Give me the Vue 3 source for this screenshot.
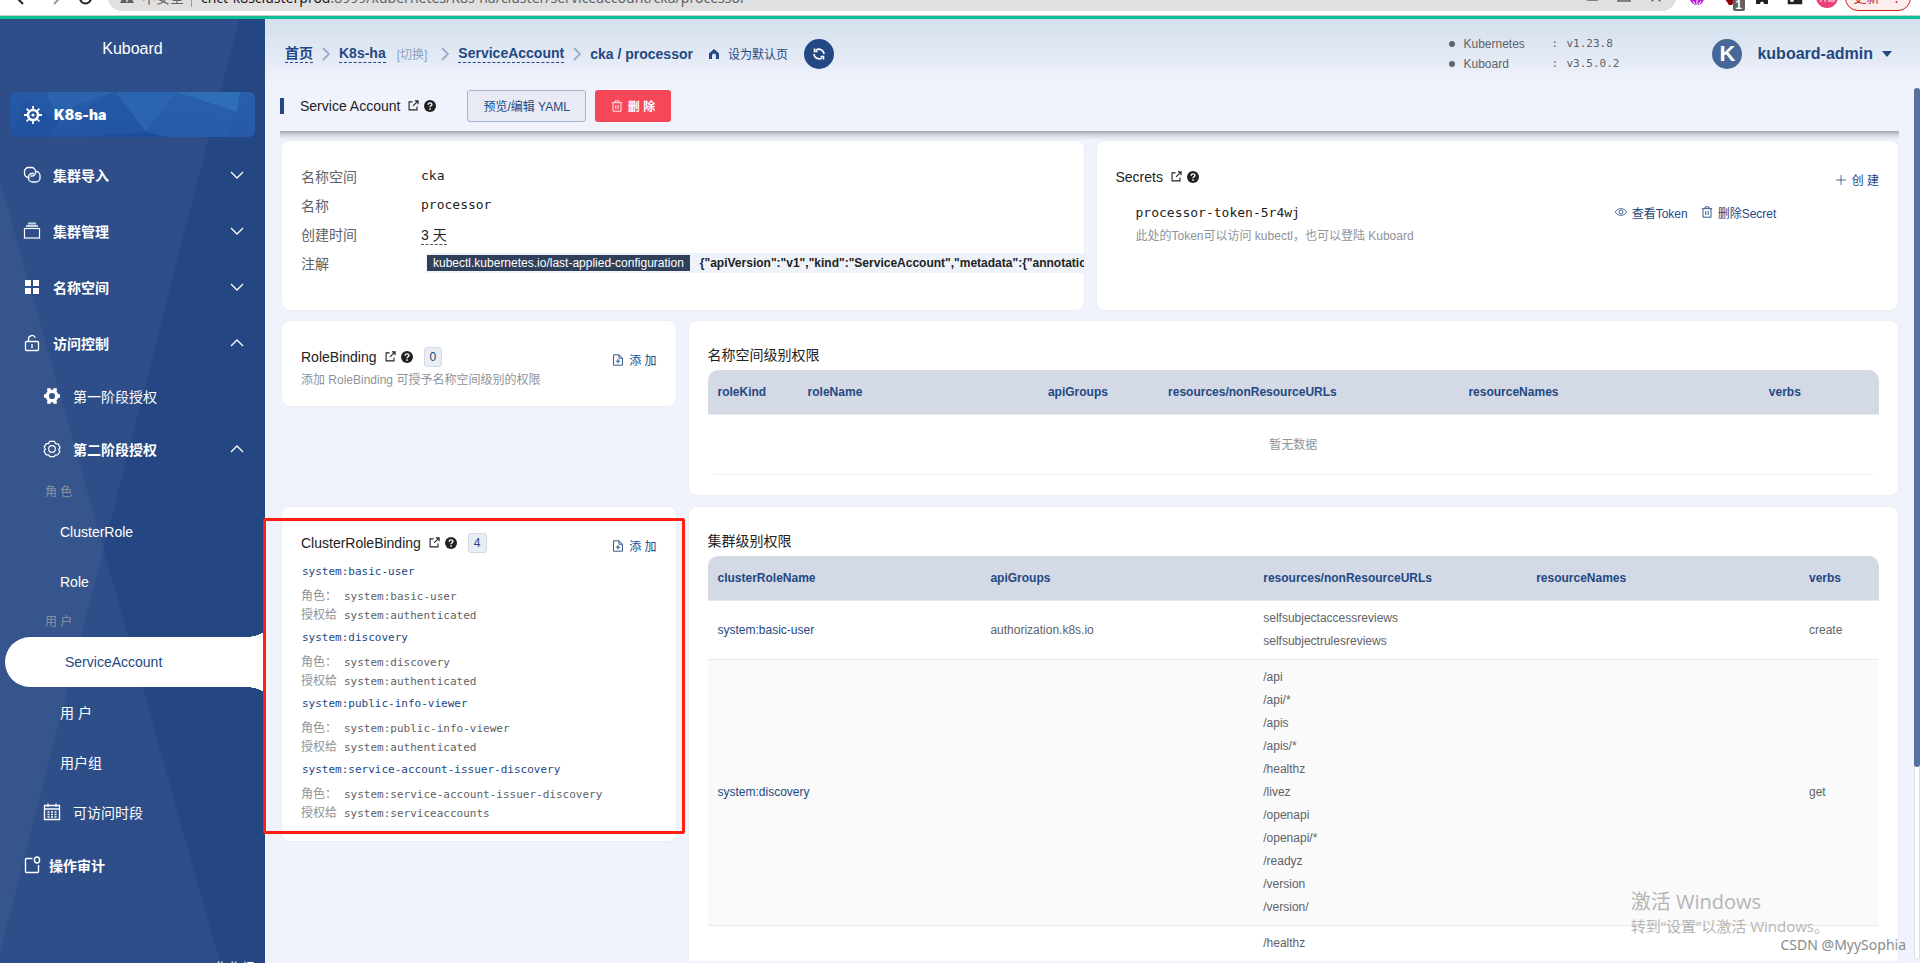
<script setup>
const topMenu = [
  { label: '集群导入', icon: 'link' },
  { label: '集群管理', icon: 'stack' },
  { label: '名称空间', icon: 'grid' },
]

const bindings = [
  { name: 'system:basic-user', to: 'system:authenticated' },
  { name: 'system:discovery', to: 'system:authenticated' },
  { name: 'system:public-info-viewer', to: 'system:authenticated' },
  { name: 'system:service-account-issuer-discovery', to: 'system:serviceaccounts' },
]

const nsColumns = ['roleKind', 'roleName', 'apiGroups', 'resources/nonResourceURLs', 'resourceNames', 'verbs']
const clusterColumns = ['clusterRoleName', 'apiGroups', 'resources/nonResourceURLs', 'resourceNames', 'verbs']

const clusterRows = [
  {
    name: 'system:basic-user',
    group: 'authorization.k8s.io',
    resources: ['selfsubjectaccessreviews', 'selfsubjectrulesreviews'],
    verb: 'create',
  },
  {
    name: 'system:discovery',
    group: '',
    resources: ['/api', '/api/*', '/apis', '/apis/*', '/healthz', '/livez', '/openapi', '/openapi/*', '/readyz', '/version', '/version/'],
    verb: 'get',
  },
  {
    name: 'system:public-info-viewer',
    group: '',
    resources: ['/healthz', '/livez', '/readyz', '/version', '/version/'],
    verb: 'get',
  },
]
</script>

<template>
  <div class="page">
    <svg class="defs" width="0" height="0" aria-hidden="true">
      <symbol id="i-ext" viewBox="0 0 12 12">
        <path d="M5 2H1.2v8.8h8.6V7M7.500 1H11v3.500M11 1 5.500 6.500" fill="none" stroke="currentColor" stroke-width="1.200" />
      </symbol>
      <symbol id="i-help" viewBox="0 0 12 12">
        <circle cx="6" cy="6" r="6" fill="currentColor" />
        <path d="M4.200 4.700c0-2.400 3.700-2.300 3.700-.2C7.900 5.800 6 5.700 6 7.300" fill="none" stroke="#fff" stroke-width="1.400" />
        <rect x="5.300" y="8.300" width="1.500" height="1.500" fill="#fff" />
      </symbol>
      <symbol id="i-trash" viewBox="0 0 12 12">
        <path d="M.8 2.700h10.400M4 2.500V.9h4v1.600M2 3v8.200h8V3M4.800 5v4M7.200 5v4" fill="none" stroke="currentColor" stroke-width=".9" />
      </symbol>
      <symbol id="i-doc" viewBox="0 0 12 12">
        <path d="M1.500.8h5.500l3.500 3.400v7h-9zM7 .8v3.400h3.500M3.800 7.200h4.400M6 5v4.400" fill="none" stroke="currentColor" stroke-width=".9" />
      </symbol>
      <symbol id="i-down" viewBox="0 0 14 8">
        <path d="M1 1l6 6 6-6" fill="none" stroke="currentColor" stroke-width="1.300" />
      </symbol>
      <symbol id="i-up" viewBox="0 0 14 8">
        <path d="M1 7l6-6 6 6" fill="none" stroke="currentColor" stroke-width="1.300" />
      </symbol>
      <symbol id="i-right" viewBox="0 0 8 14">
        <path d="M1 1l6 6-6 6" fill="none" stroke="currentColor" stroke-width="1.800" />
      </symbol>
    </svg>

    <div class="chrome">
      <svg class="nav-icons" width="108" height="15" viewBox="0 0 108 15" aria-hidden="true">
        <path d="M15-4l8 8" stroke="#222" stroke-width="2" fill="none" />
        <path d="M61-3l-7 7" stroke="#999" stroke-width="2" fill="none" />
        <path d="M80-2a5.500 5.500 0 0 0 11 0" stroke="#222" stroke-width="2" fill="none" />
      </svg>
      <div class="address">
        <svg width="14" height="22" viewBox="0 0 14 22" aria-hidden="true"><path d="M7 4l7 13H0z" fill="#5f6368" /><path d="M7 8v4M7 14v2" stroke="#e0e0e0" stroke-width="1.500" /></svg>
        <span class="unsafe">不安全</span>
        <span class="url"><b>cnct-k8sclusterprod</b>:8999/kubernetes/K8s-ha/cluster/serviceaccount/cka/processor</span>
        <svg class="address-icons" width="78" height="22" viewBox="0 0 78 22" aria-hidden="true">
          <g fill="none" stroke="#5f6368" stroke-width="1.500">
            <rect x="1" y="5" width="11" height="9" rx="1" />
            <path d="M32 6v9h12v-4M36 12c1-3 3-4 7-4" />
          </g>
          <path d="M70 5l2 4h4l-2 3 1 4-5-3-5 3 1-4-2-3h4z" fill="#5f6368" />
        </svg>
      </div>
      <svg class="extensions" width="154" height="15" viewBox="0 0 154 15" aria-hidden="true">
        <circle cx="14" cy="-2" r="7" fill="#b61ed6" />
        <path d="M10 1l2 3M14 0v5M18 1l-2 3" stroke="#fff" />
        <path d="M40-4h14l-5 9h-3z" fill="#8b0000" />
        <rect x="50" y="-4" width="12" height="15" rx="2" fill="#5f6163" />
        <path d="M73 4v-6h12v6h-4a2 2.500 0 0 0-4 0z" fill="#202124" />
        <path d="M106-4h12v7h-12zM112-3v4h5" fill="none" stroke="#202124" stroke-width="2.500" />
        <circle cx="144" cy="-3" r="11" fill="#ec407a" />
        <path d="M138-3v5M142-3v5M145 1h7" stroke="#fff" />
      </svg>
      <span class="ext-count">1</span>
      <button class="update" type="button">更新 <span>⋮</span></button>
    </div>

    <div class="body">
      <aside class="sidebar">
        <svg class="facets" viewBox="0 0 265 944" preserveAspectRatio="none" aria-hidden="true">
          <path d="M0 0H239L0 934z" fill="#fff" opacity=".042" />
          <path d="M0 162L220 944H0z" fill="#fff" opacity=".042" />
        </svg>
        <div class="brand">Kuboard</div>
        <a class="cluster" href="#">
          <svg class="cluster-bg" viewBox="0 0 245 45" preserveAspectRatio="none" aria-hidden="true">
            <defs>
              <linearGradient id="cluster-fill" x1="0" y1="1" x2="1" y2="0">
                <stop offset="0" stop-color="#2353a0" />
                <stop offset="1" stop-color="#2860ae" />
              </linearGradient>
            </defs>
            <path d="M0 0h245v45H0z" fill="url(#cluster-fill)" />
            <path d="M36 0h69L50 30z" fill="#2f69b3" opacity=".6" />
            <path d="M105 0h61l-30 40z" fill="#2f6bb6" opacity=".6" />
            <path d="M166 0h64l-3 20z" fill="#3679bd" opacity=".6" />
            <path d="M62 14L105 0l31 40-60 5z" fill="#2055a2" opacity=".45" />
            <path d="M166 0l61 20-10 25h-60l-21-5z" fill="#2a60ae" opacity=".5" />
            <path d="M0 45L14 8 50 30l-14 15z" fill="#1e4f9b" opacity=".45" />
            <path d="M76 45l60-5 21 5z" fill="#1b4a94" opacity=".7" />
          </svg>
          <svg class="m-icon" width="18" height="18" viewBox="0 0 18 18" aria-hidden="true">
            <circle cx="9" cy="9" r="5" fill="none" stroke="#fff" stroke-width="2.600" />
            <circle cx="9" cy="9" r="1.600" fill="#fff" />
            <path d="M9 0v4M9 14v4M0 9h4M14 9h4M2.600 2.600l2.800 2.800M12.600 12.600l2.800 2.800M15.400 2.600l-2.800 2.800M5.400 12.600l-2.800 2.800" stroke="#fff" stroke-width="1.800" />
          </svg>
          <span>K8s-ha</span>
        </a>

        <nav class="menu">
          <a v-for="m in topMenu" :key="m.label" class="item top" href="#">
            <svg v-if="m.icon === 'link'" class="m-icon" width="18" height="18" viewBox="0 0 18 18" fill="none" stroke="#fff" stroke-width="1.300" aria-hidden="true">
              <path d="M6.500 11.500h-1a4 4 0 0 1-4-4v-2a4 4 0 0 1 4-4h3a4 4 0 0 1 4 4v1a3.500 3.500 0 0 1-3.500 3.500H7.500" />
              <path d="M12.500 5.500h.5a4 4 0 0 1 4 4v2.500a4 4 0 0 1-4 4H9.500a4 4 0 0 1-4-4v-1A3.500 3.500 0 0 1 9 7.500h2" />
            </svg>
            <svg v-else-if="m.icon === 'stack'" class="m-icon" width="18" height="18" viewBox="0 0 18 18" fill="none" stroke="#fff" aria-hidden="true">
              <path d="M5 1.500h8M3 4h12" stroke-width="1.800" opacity=".75" />
              <rect x="1.500" y="6.500" width="15" height="9.500" stroke-width="1.200" />
            </svg>
            <svg v-else class="m-icon" width="18" height="18" viewBox="0 0 18 18" fill="#fff" aria-hidden="true">
              <path d="M2 2h6v6H2zM10 2h6v6h-6zM2 10h6v6H2zM10 10h6v6h-6z" />
            </svg>
            <span>{{ m.label }}</span>
            <svg class="arrow" width="14" height="8" aria-hidden="true"><use href="#i-down" /></svg>
          </a>
          <a class="item top" href="#">
            <svg class="m-icon" width="18" height="18" viewBox="0 0 18 18" fill="none" stroke="#fff" stroke-width="1.300" aria-hidden="true">
              <rect x="2.500" y="7.500" width="13" height="9" rx="1" />
              <path d="M5.500 7.500V5a3.500 3.500 0 0 1 6.800-1.200M9 10v4" />
            </svg>
            <span>访问控制</span>
            <svg class="arrow" width="14" height="8" aria-hidden="true"><use href="#i-up" /></svg>
          </a>
          <a class="item sub" href="#">
            <svg class="m-icon" width="18" height="18" viewBox="0 0 18 18" aria-hidden="true">
              <circle cx="9" cy="9" r="4.800" fill="none" stroke="#fff" stroke-width="3.400" />
              <path d="M5.500 1.300L6.500 5M12.500 1.300L11.500 5M5.500 16.700L6.500 13M12.500 16.700L11.500 13M1 9h3M14 9h3" stroke="#fff" stroke-width="3.400" />
            </svg>
            <span>第一阶段授权</span>
          </a>
          <a class="item sub strong" href="#">
            <svg class="m-icon" width="18" height="18" viewBox="0 0 18 18" fill="none" stroke="#fff" stroke-width="1.200" stroke-linejoin="round" aria-hidden="true">
              <path d="M6.500 1.300h5l1 2.300 2.600.2 2 4-1.500 1.500 1.300 2.300-2.300 3.400-2.400.1-1 1.600H6.800l-1-1.800-2.700-.1L1 11.100l1.400-1.900L1.200 6.900l2-3.300 2.500.1z" />
              <circle cx="9" cy="9" r="3.300" />
            </svg>
            <span>第二阶段授权</span>
            <svg class="arrow" width="14" height="8" aria-hidden="true"><use href="#i-up" /></svg>
          </a>
          <div class="group">角 色</div>
          <a class="item leaf" href="#">ClusterRole</a>
          <a class="item leaf" href="#">Role</a>
          <div class="group">用 户</div>
          <a class="item leaf active" href="#">ServiceAccount</a>
          <a class="item leaf" href="#">用 户</a>
          <a class="item leaf" href="#">用户组</a>
          <a class="item sub" href="#">
            <svg class="m-icon" width="18" height="18" viewBox="0 0 18 18" fill="none" stroke="#fff" stroke-width="1.300" aria-hidden="true">
              <path d="M1.500 2.500h15v14h-15zM1.500 6h15M5 .5v3.500M13 .5v3.500" />
              <path d="M4.500 9h2M8 9h2M11.500 9h2M4.500 11.500h2M8 11.500h2M11.500 11.500h2M4.500 14h2M8 14h2M11.500 14h2" />
            </svg>
            <span>可访问时段</span>
          </a>
          <a class="item top audit" href="#">
            <svg class="m-icon" width="18" height="18" viewBox="0 0 18 18" fill="none" stroke="#fff" stroke-width="1.400" aria-hidden="true">
              <path d="M9.500 2.500h-6a1 1 0 0 0-1 1v12a1 1 0 0 0 1 1h11a1 1 0 0 0 1-1V9" />
              <ellipse cx="14" cy="4" rx="2.600" ry="3" />
            </svg>
            <span>操作审计</span>
          </a>
        </nav>
        <div class="mode">化作场</div>
      </aside>

      <main class="main">
        <header class="crumbs">
          <a class="crumb" href="#">首页</a>
          <svg class="sep" width="8" height="14" aria-hidden="true"><use href="#i-right" /></svg>
          <a class="crumb" href="#">K8s-ha</a>
          <a class="switch" href="#">[切换]</a>
          <svg class="sep" width="8" height="14" aria-hidden="true"><use href="#i-right" /></svg>
          <a class="crumb" href="#">ServiceAccount</a>
          <svg class="sep" width="8" height="14" aria-hidden="true"><use href="#i-right" /></svg>
          <span class="here">cka / processor</span>
          <button class="home" type="button">
            <svg width="12" height="12" viewBox="0 0 12 12" aria-hidden="true"><path d="M6 1l5 4.500V11H8V7.500a2 2 0 0 0-4 0V11H1V5.500z" fill="currentColor" /></svg>
            设为默认页
          </button>
          <button class="refresh" type="button" aria-label="刷新">
            <svg width="14" height="14" viewBox="0 0 14 14" fill="none" stroke="#fff" stroke-width="1.600" aria-hidden="true">
              <path d="M4 3.200A5 5 0 0 1 12 7M10 10.800A5 5 0 0 1 2 7M2.500 1.500v3h3M11.500 12.500v-3h-3" />
            </svg>
          </button>
          <dl class="versions">
            <dt>Kubernetes</dt><dd class="colon">:</dd><dd>v1.23.8</dd>
            <dt>Kuboard</dt><dd class="colon">:</dd><dd>v3.5.0.2</dd>
          </dl>
          <button class="user" type="button">
            <span class="avatar">K</span>
            <span>kuboard-admin</span>
            <svg width="10" height="6" viewBox="0 0 10 6" aria-hidden="true"><path d="M0 0h10L5 6z" fill="currentColor" /></svg>
          </button>
        </header>

        <div class="titlebar">
          <h1 class="title">Service Account
            <svg class="ext" width="11" height="11" aria-hidden="true"><use href="#i-ext" /></svg>
            <svg class="help" width="12" height="12" aria-hidden="true"><use href="#i-help" /></svg>
          </h1>
          <button class="btn plain" type="button">预览/编辑 YAML</button>
          <button class="btn danger" type="button">
            <svg width="12" height="12" aria-hidden="true"><use href="#i-trash" /></svg>删 除
          </button>
        </div>

        <div class="content">
          <div class="row half">
            <section class="card">
              <dl class="info">
                <dt>名称空间</dt><dd class="mono">cka</dd>
                <dt>名称</dt><dd class="mono">processor</dd>
                <dt>创建时间</dt><dd><span class="age">3 天</span></dd>
                <dt>注解</dt>
                <dd class="annotation"><span class="tag">kubectl.kubernetes.io/last-applied-configuration</span><span class="json">{"apiVersion":"v1","kind":"ServiceAccount","metadata":{"annotations":{},"name":"processor","namespace":"cka"}}</span></dd>
              </dl>
            </section>
            <section class="card">
              <div class="head">
                <h2>Secrets
                  <svg class="ext" width="11" height="11" aria-hidden="true"><use href="#i-ext" /></svg>
                  <svg class="help" width="12" height="12" aria-hidden="true"><use href="#i-help" /></svg>
                </h2>
                <button class="add" type="button">
                  <svg width="12" height="12" viewBox="0 0 12 12" aria-hidden="true"><path d="M6 1v10M1 6h10" stroke="currentColor" stroke-width=".8" /></svg>创 建
                </button>
              </div>
              <div class="secret">
                <div class="mono">processor-token-5r4wj</div>
                <div class="acts">
                  <button type="button">
                    <svg width="12" height="12" viewBox="0 0 12 12" fill="none" stroke="currentColor" stroke-width=".8" aria-hidden="true"><path d="M.3 6C3 1.500 9 1.500 11.700 6 9 10.500 3 10.500.3 6z" /><circle cx="6" cy="6" r="2" /></svg>查看Token
                  </button>
                  <button type="button">
                    <svg width="12" height="12" aria-hidden="true"><use href="#i-trash" /></svg>删除Secret
                  </button>
                </div>
                <p class="note">此处的Token可以访问 kubectl，也可以登陆 Kuboard</p>
              </div>
            </section>
          </div>

          <div class="row split">
            <section class="card side">
              <div class="head">
                <h2>RoleBinding
                  <svg class="ext" width="11" height="11" aria-hidden="true"><use href="#i-ext" /></svg>
                  <svg class="help" width="12" height="12" aria-hidden="true"><use href="#i-help" /></svg>
                  <span class="count">0</span>
                </h2>
                <button class="add" type="button"><svg width="12" height="12" aria-hidden="true"><use href="#i-doc" /></svg>添 加</button>
              </div>
              <p class="desc">添加 RoleBinding 可授予名称空间级别的权限</p>
            </section>
            <section class="card">
              <h3>名称空间级别权限</h3>
              <table class="perm">
                <colgroup>
                  <col class="c1"><col class="c2"><col class="c3"><col class="c4"><col class="c4"><col class="c3">
                </colgroup>
                <thead><tr><th v-for="c in nsColumns" :key="c">{{ c }}</th></tr></thead>
              </table>
              <div class="empty">暂无数据</div>
            </section>
          </div>

          <div class="row split">
            <section class="card side">
              <div class="head">
                <h2>ClusterRoleBinding
                  <svg class="ext" width="11" height="11" aria-hidden="true"><use href="#i-ext" /></svg>
                  <svg class="help" width="12" height="12" aria-hidden="true"><use href="#i-help" /></svg>
                  <span class="count">4</span>
                </h2>
                <button class="add" type="button"><svg width="12" height="12" aria-hidden="true"><use href="#i-doc" /></svg>添 加</button>
              </div>
              <ul class="bindings">
                <li v-for="b in bindings" :key="b.name">
                  <a href="#">{{ b.name }}</a>
                  <div class="pair"><span>角色：</span><code>{{ b.name }}</code></div>
                  <div class="pair"><span>授权给</span><code>{{ b.to }}</code></div>
                </li>
              </ul>
            </section>
            <section class="card">
              <h3>集群级别权限</h3>
              <table class="perm">
                <colgroup><col><col><col><col><col class="last"></colgroup>
                <thead><tr><th v-for="c in clusterColumns" :key="c">{{ c }}</th></tr></thead>
                <tbody>
                  <tr v-for="r in clusterRows" :key="r.name">
                    <td><a href="#">{{ r.name }}</a></td>
                    <td>{{ r.group }}</td>
                    <td><div v-for="p in r.resources" :key="p">{{ p }}</div></td>
                    <td></td>
                    <td>{{ r.verb }}</td>
                  </tr>
                </tbody>
              </table>
            </section>
          </div>
        </div>
        <div class="track"><div class="thumb"></div></div>
      </main>
    </div>

    <div class="highlight"></div>
    <div class="activate">
      <div class="activate-title">激活 Windows</div>
      <div class="activate-text">转到“设置”以激活 Windows。</div>
    </div>
    <div class="credit">CSDN @MyySophia</div>
  </div>
</template>

<style>
html,
body {
  overflow: hidden;
}
</style>

<style scoped>
.page {
  position: relative;
  display: flex;
  flex-direction: column;
  height: 100vh;
  overflow: hidden;
  font-family: "Liberation Sans", "Noto Sans CJK SC", sans-serif;
  font-size: 14px;
  color: #222;
  background: #f0f3fc;
}
.page * { box-sizing: border-box; }
.defs { position: absolute; }
svg { flex: none; overflow: visible; }
a { color: #234883; text-decoration: none; }
button { font: inherit; color: #234883; border: 0; background: none; padding: 0; display: inline-flex; align-items: center; white-space: nowrap; }
h1, h2, h3, p, dl, dd, ul { margin: 0; padding: 0; font-weight: 400; font-size: 14px; }

.chrome {
  position: relative;
  flex: none;
  display: flex;
  align-items: flex-start;
  height: 19px;
  overflow: hidden;
  background: #fff;
  border-bottom: 3px solid #0fbf93;
  box-shadow: inset 0 -1px #ccc;
}
.address {
  flex: 1;
  display: flex;
  align-items: center;
  height: 24px;
  margin-top: -13px;
  padding: 0 12px 4px;
  border-radius: 0 0 14px 14px;
  background: #e0e0e0;
  font: 14px "Noto Sans", "Noto Sans CJK SC", sans-serif;
  color: #5f6368;
}
.unsafe { margin-left: 8px; padding-right: 7px; border-right: 1px solid #999; }
.url { margin-left: 9px; white-space: nowrap; }
.url b { font-weight: 400; color: #202124; }
.address-icons { margin-left: auto; }
.extensions { margin: 0 8px 0 7px; }
.ext-count { position: absolute; right: 178px; top: -1px; font: bold 12px/12px "Liberation Sans", sans-serif; color: #fff; }
.update {
  align-items: center;
  justify-content: center;
  gap: 10px;
  width: 66px;
  height: 26px;
  margin: -15px 9px 0 0;
  padding-bottom: 3px;
  border: 1px solid #c5221f;
  border-radius: 13px;
  background: #fdeeed;
  color: #c5221f;
  font-size: 13px;
}

.body { flex: 1; display: flex; min-height: 0; }
.sidebar { position: relative; flex: none; width: 265px; overflow: hidden; background: #244783; color: #fff; }
.facets { position: absolute; inset: 0; width: 100%; height: 100%; }
.brand { position: relative; height: 73px; line-height: 60px; text-align: center; font-size: 16px; }
.cluster {
  position: relative;
  display: flex;
  align-items: center;
  gap: 12px;
  height: 45px;
  margin: 0 10px 10px;
  padding-left: 14px;
  border-radius: 6px;
  overflow: hidden;
  color: #fff;
  font: 900 14px Inter, sans-serif;
}
.cluster-bg { position: absolute; inset: 0; width: 100%; height: 100%; }
.cluster .m-icon, .cluster span { position: relative; }
.menu { position: relative; }
.item { display: flex; align-items: center; height: 50px; padding-right: 21px; color: #fff; }
.item .m-icon { margin-right: 12px; }
.top { height: 56px; padding-left: 23px; font-weight: 700; }
.sub { padding-left: 43px; }
.strong { height: 56px; font-weight: 700; }
.arrow { margin-left: auto; }
.leaf { padding-left: 60px; }
.group { height: 30px; padding-left: 45px; line-height: 30px; font-size: 12px; color: #8b93a1; }
.active { position: relative; margin-left: 5px; border-radius: 25px 0 0 25px; background: #fff; color: #234883; }
.active::before, .active::after { content: ""; position: absolute; right: 0; width: 20px; height: 8px; }
.active::before { bottom: 100%; background: radial-gradient(ellipse 20px 8px at 0 0, transparent 98%, #fff); }
.active::after { top: 100%; background: radial-gradient(ellipse 20px 8px at 0 100%, transparent 98%, #fff); }
.audit .m-icon { margin-right: 8px; }
.mode { position: absolute; right: 9px; bottom: -14px; line-height: 18px; }

.main { position: relative; flex: 1; display: flex; flex-direction: column; min-width: 0; padding: 0 21px 2px 15px; background: linear-gradient(#d3dfec, #f0f3fc 68px); }
.crumbs { flex: none; display: flex; align-items: center; height: 69px; padding-left: 5px; color: #234883; }
.crumb { font-weight: 700; line-height: 17px; border-bottom: 1px dashed #234883; }
.sep { margin: 0 9px; color: #9aabc8; }
.switch { margin: 0 5px 0 11px; font-size: 12px; color: #8c9fc4; }
.here { font-weight: 700; }
.home { gap: 8px; margin-left: 15px; font-size: 12px; }
.refresh { justify-content: center; width: 30px; height: 30px; margin-left: 16px; border-radius: 50%; background: #234883; }
.versions {
  display: grid;
  grid-template-columns: 91px 15px auto;
  margin-left: auto;
  padding-left: 11px;
  line-height: 20px;
  color: #606266;
  font-size: 12px;
}
.versions dt { display: flex; align-items: center; margin-left: -11px; }
.versions dt::before { content: ""; width: 6px; height: 6px; margin-right: 8px; border-radius: 50%; background: #606266; }
.versions dd { font: 11px/20px "DejaVu Sans Mono", monospace; }
.user { gap: 9px; margin: 0 7px 0 93px; font-size: 16px; font-weight: 700; }
.avatar { width: 30px; height: 30px; margin-right: 6px; border-radius: 50%; background: #466798; color: #fff; font-size: 22px; line-height: 30px; text-align: center; }

.titlebar { position: relative; flex: none; display: flex; align-items: center; height: 43px; padding-bottom: 8px; }
.titlebar::after { content: ""; position: absolute; left: 0; right: 0; top: 100%; height: 9px; background: linear-gradient(rgba(0, 0, 0, .32), rgba(0, 0, 0, .1) 50%, transparent); }
.title { display: flex; align-items: center; margin-right: 31px; padding-left: 16px; border-left: 4px solid #234883; line-height: 16px; }
.ext { margin-left: 8px; }
.help { margin-left: 5px; }
.btn { justify-content: center; height: 32px; border-radius: 3px; font-size: 12px; padding: 0 15px; }
.plain { border: 1px solid #a3b4cf; background: #e8ebf3; margin-right: 9px; }
.danger { gap: 5px; background: #f54758; color: #fff; font-weight: 700; padding: 0 16px; }

.content { flex: 1; min-height: 0; padding: 9px 0 0 1px; overflow: hidden; }
.row { display: grid; gap: 11px; align-items: start; margin-bottom: 10px; }
.half { grid-template-columns: 1fr 1fr; align-items: stretch; margin-bottom: 9px; }
.split { grid-template-columns: calc(25% - 9px) minmax(0, 1fr); }
.card { min-width: 0; padding: 20px 19px; border: 1px solid #ebeef5; border-radius: 9px; background: #fff; overflow: hidden; }
.side { padding-bottom: 18px; }
.info { display: grid; grid-template-columns: 120px minmax(0, 1fr); grid-auto-rows: 29px; align-items: center; padding-bottom: 13px; margin-right: -19px; }
.info dt { color: #606266; }
.mono { font: 13px "DejaVu Sans Mono", monospace; }
.age { padding-bottom: 1px; border-bottom: 1px dashed #555; }
.info .annotation { display: flex; align-items: center; gap: 10px; height: 20px; margin-left: 5px; padding-left: 1px; background: #edf3f8; white-space: nowrap; font-size: 12px; }
.tag { padding: 0 6px; line-height: 16px; background: #303f5a; color: #fff; }
.json { font-weight: 700; }
.head { display: flex; justify-content: space-between; height: 31px; }
.head h2 { display: flex; align-items: center; }
.add { gap: 5px; margin-top: 6px; font-size: 12px; }
.count { margin-left: 11px; padding: 0 5px; border: 1px solid #d3dae6; border-radius: 3px; background: #e9edf4; font-size: 12px; line-height: 18px; color: #234883; }
.secret { display: grid; grid-template-columns: 29fr 16fr; align-items: center; grid-auto-rows: 24px; margin-top: 8px; padding-left: 20px; }
.acts { display: flex; gap: 13px; font-size: 12px; }
.acts button { gap: 5px; }
.note, .desc { font-size: 12px; line-height: 16px; color: #909399; }
h3 { height: 29px; line-height: 28px; }

.perm { width: 100%; table-layout: fixed; border-collapse: separate; border-spacing: 0; font-size: 12px; color: #606266; }
.perm th { height: 45px; padding: 0 10px; border-bottom: 1px solid #e6eaf2; background: #d3d9e5; color: #234883; text-align: left; }
.perm th:first-child { border-top-left-radius: 10px; }
.perm th:last-child { border-top-right-radius: 10px; }
.perm td { padding: 6px 10px; border-bottom: 1px solid #ebebeb; line-height: 23px; }
.perm tbody tr:nth-child(even) td { background: #fafafa; }
.c1 { width: 90px; }
.c2 { width: 240px; }
.c3 { width: 120px; }
.c4 { width: 300px; }
.last { width: 80px; }
.empty { margin: 0 6px; height: 60px; line-height: 60px; border-bottom: 1px solid #ebeef5; text-align: center; font-size: 12px; color: #909399; }

.bindings { margin-top: 1px; list-style: none; font-size: 12px; color: #909399; }
.bindings a { display: block; height: 28px; line-height: 25px; padding-left: 1px; font-family: "DejaVu Sans Mono", monospace; font-size: 11px; }
.pair { display: flex; height: 19px; line-height: 19px; }
.pair span { width: 43px; }
.pair code { font: 11px/19px "DejaVu Sans Mono", monospace; color: #606266; }

.track { position: absolute; right: 0; top: 69px; bottom: 3px; width: 6px; border: 1px solid #dcdfe6; border-radius: 3px; background: #fff; }
.thumb { height: 78%; margin: -1px; border-radius: 3px; background: #57709d; }

.highlight { position: absolute; left: 263px; top: 518px; width: 422px; height: 316px; border: 3px solid #ff1e10; border-radius: 2px; }
.activate { position: absolute; right: 91px; bottom: 26px; font-family: "Open Sans", "Noto Sans CJK SC", sans-serif; color: #b5b5b5; white-space: nowrap; }
.activate-title { font-size: 20px; line-height: 26px; }
.activate-text { font-size: 15px; line-height: 22px; }
.credit { position: absolute; right: 14px; bottom: 8px; font: 14px/20px "Noto Sans", sans-serif; color: #8a8a8a; }
</style>
